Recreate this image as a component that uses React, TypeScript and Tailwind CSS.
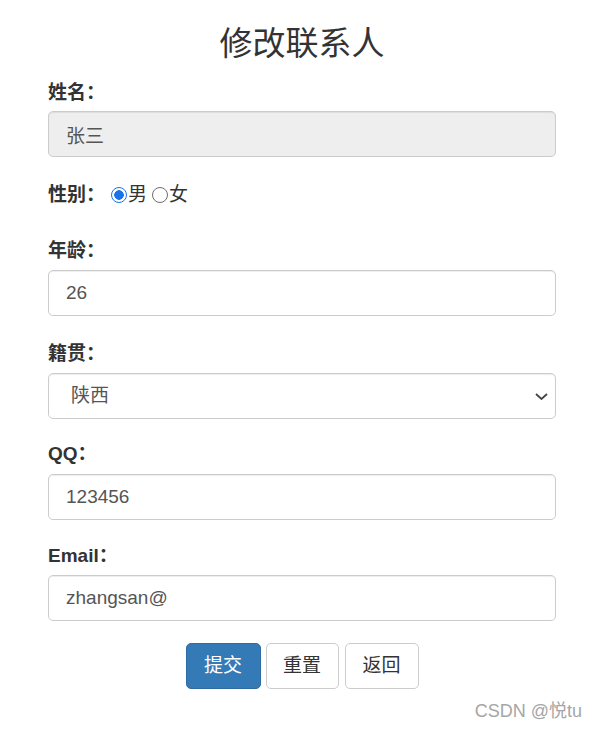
import React, { useState } from "react";

const font = "font-['Liberation_Sans','Noto_Sans_CJK_SC',sans-serif]";

const FieldLabel: React.FC<{ text: string; className?: string }> = ({
  text,
  className = "",
}) => (
  <label
    className={`block h-[26px] pt-[4px] leading-[22px] text-[19px] font-bold text-[#333] ${className}`}
  >
    {text}
  </label>
);

const inputCls =
  "block w-full h-[46px] px-[17px] text-[19px] text-[#555] border border-[#ccc] rounded-[5px] shadow-[inset_0_1px_1px_rgba(0,0,0,0.075)] outline-none";

const radioCls =
  "appearance-none m-0 w-[16px] h-[16px] rounded-full border border-[#6d6d6d] bg-white checked:border-[#1a73e8] checked:bg-[radial-gradient(circle,#1a73e8_0_4.5px,#fff_5px)]";

export default function App() {
  const [sex, setSex] = useState("男");
  const [age, setAge] = useState("26");
  const [place, setPlace] = useState("陕西");
  const [qq, setQq] = useState("123456");
  const [email, setEmail] = useState("zhangsan@");

  return (
    <div className={`${font} bg-white w-[596px] min-h-[730px] text-[#333]`}>
      <div className="ml-[48px] w-[508px]">
        <h2 className="pt-[26px] h-[62px] leading-[36px] text-[33px] text-center font-normal text-[#333]">
          修改联系人
        </h2>

        <FieldLabel text="姓名：" className="mt-[16px]" />
        <input
          className={`${inputCls} mt-[7px] bg-[#eee]`}
          value="张三"
          disabled
          readOnly
        />

        <div className="mt-[24px] h-[26px] pt-[2px] flex items-center text-[19px]">
          <span className="font-bold w-[57px] leading-[26px]">性别：</span>
          <label className="ml-[6px] flex items-center">
            <input
              type="radio"
              name="sex"
              className={radioCls}
              checked={sex === "男"}
              onChange={() => setSex("男")}
            />
            <span className="ml-[1px]">男</span>
          </label>
          <label className="ml-[5px] flex items-center">
            <input
              type="radio"
              name="sex"
              className={radioCls}
              checked={sex === "女"}
              onChange={() => setSex("女")}
            />
            <span className="ml-[1px]">女</span>
          </label>
        </div>

        <FieldLabel text="年龄：" className="mt-[29px]" />
        <input
          className={`${inputCls} mt-[8px] bg-white`}
          value={age}
          onChange={(e) => setAge(e.target.value)}
        />

        <FieldLabel text="籍贯：" className="mt-[23px]" />
        <div className="relative mt-[8px]">
          <select
            className="appearance-none block w-full h-[46px] pl-[22px] pr-[30px] text-[19px] text-[#555] bg-white border border-[#ccc] rounded-[5px] shadow-[inset_0_1px_1px_rgba(0,0,0,0.075)] outline-none"
            value={place}
            onChange={(e) => setPlace(e.target.value)}
          >
            <option>陕西</option>
            <option>北京</option>
            <option>上海</option>
          </select>
          <svg
            className="absolute right-[8px] top-[20px] pointer-events-none"
            width="13"
            height="7"
            viewBox="0 0 13 7"
          >
            <path
              d="M1 1l5.5 5 5.5-5"
              fill="none"
              stroke="#444"
              strokeWidth="1.8"
            />
          </svg>
        </div>

        <FieldLabel text="QQ：" className="mt-[20px]" />
        <input
          className={`${inputCls} mt-[9px] bg-white`}
          value={qq}
          onChange={(e) => setQq(e.target.value)}
        />

        <FieldLabel text="Email：" className="mt-[21px]" />
        <input
          className={`${inputCls} mt-[8px] bg-white`}
          value={email}
          onChange={(e) => setEmail(e.target.value)}
        />

        <div className="mt-[22px] flex justify-center gap-[5px]">
          <button className="w-[75px] h-[46px] text-[19px] text-white bg-[#337ab7] border border-[#2e6da4] rounded-[5px]">
            提交
          </button>
          <button className="w-[73px] h-[46px] text-[19px] text-[#333] bg-white border border-[#ccc] rounded-[5px]">
            重置
          </button>
          <button className="ml-[1px] w-[74px] h-[46px] text-[19px] text-[#333] bg-white border border-[#ccc] rounded-[5px]">
            返回
          </button>
        </div>
      </div>

      <div className="mt-[11px] pr-[14px] text-right text-[18px] leading-[22px] text-[#a6a6a6]">
        CSDN @悦tu
      </div>
    </div>
  );
}
